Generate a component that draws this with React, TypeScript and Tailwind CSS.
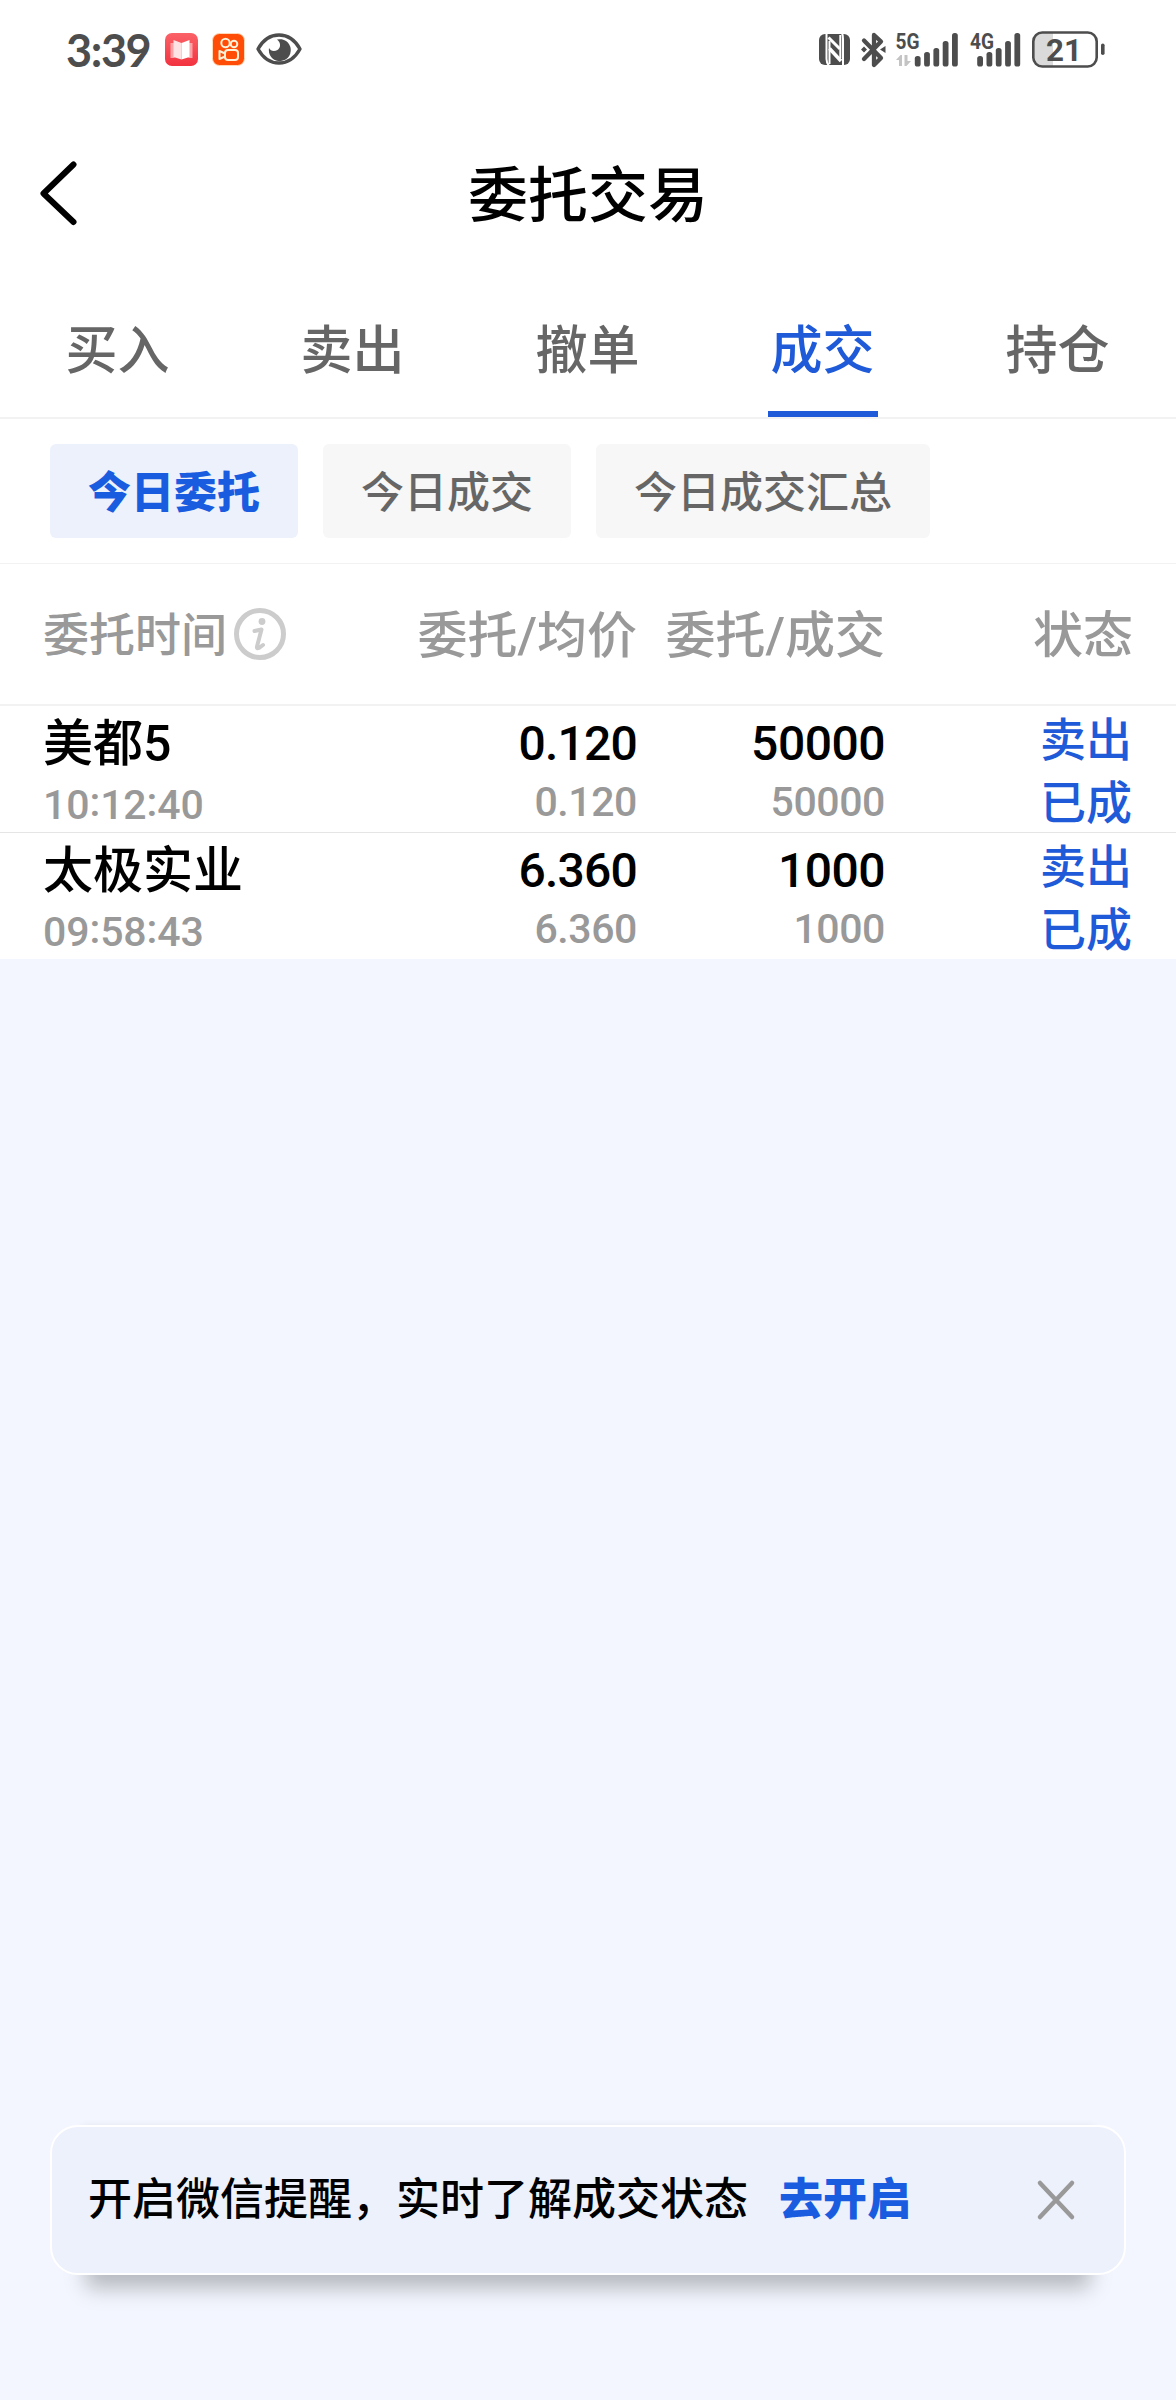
import { clsx } from "clsx";

const tabs = ["买入", "卖出", "撤单", "成交", "持仓"];
const filters = ["今日委托", "今日成交", "今日成交汇总"];

const orders = [
  { name: "美都5", time: "10:12:40", price: "0.120", avg: "0.120", amount: "50000", done: "50000", side: "卖出", status: "已成" },
  { name: "太极实业", time: "09:58:43", price: "6.360", avg: "6.360", amount: "1000", done: "1000", side: "卖出", status: "已成" }
];

const barTops = [56, 52, 48, 41, 33];

function Bars({ x }: { x: number }) {
  return (
    <g fill="#4d4d4d">
      {barTops.map((top, i) => (
        <rect key={top} x={x + i * 9.3} y={top} width="5.8" height={66.5 - top} rx="2.6" />
      ))}
    </g>
  );
}

function StatusBar() {
  return (
    <div className="flex h-[98px] items-center justify-between pl-[66px] pr-[70px]">
      <div className="flex items-center">
        <span className="w-[99px] pt-px font-['Lato',sans-serif] text-[45px] leading-[50px] font-bold tracking-[-1.4px] text-[#4d4d4d]">3:39</span>

        {/* Reader app */}
        <svg className="h-[33px] w-[33px]" viewBox="0 0 33 33">
          <defs>
            <linearGradient id="reader" x1="0" y1="0" x2="0" y2="1">
              <stop offset="0" stopColor="#fb6268" />
              <stop offset="1" stopColor="#f2323f" />
            </linearGradient>
          </defs>
          <rect width="33" height="33" rx="7" fill="url(#reader)" />
          <path d="M5.5 10h4v15h-4zM23.5 10h4v15h-4z" fill="#fba3a6" />
          <path d="M8.5 7l8 3v16.5l-8-2.5z" fill="#fde3e3" />
          <path d="M24.5 7l-8 3v16.5l8-2.5z" fill="#fff" />
        </svg>

        {/* Video app */}
        <svg className="ml-3.5 h-[33px] w-[33px]" viewBox="0 0 33 33">
          <rect x="0.5" y="0.5" width="32" height="32" rx="7" fill="#ff4c06" stroke="#ffd9b8" />
          <g fill="none" stroke="#fff0d8" strokeWidth="2">
            <circle cx="13.5" cy="10" r="4.2" />
            <circle cx="22" cy="11" r="3.3" />
            <rect x="13" y="17" width="13" height="10" rx="3" />
            <path d="M13 20.5L7.5 18v8l5.5-2.5" strokeLinejoin="round" />
          </g>
        </svg>

        {/* Eye comfort */}
        <svg className="ml-[11px] h-[32px] w-[46px]" viewBox="0 0 46 32">
          <path d="M2 16C7 7 14 2 23 2s16 5 21 14C39 25 32 30 23 30S7 25 2 16z" fill="none" stroke="#4d4d4d" strokeWidth="3.4" strokeLinejoin="round" />
          <path d="M21 6.5a11 11 0 1 1-8 8.500c1.5 3 5 4 8.5 2 3.500-2.300 3.500-7.500-.5-10.500z" fill="#4d4d4d" />
        </svg>
      </div>

      <svg className="h-[98px] w-[290px]" viewBox="816 0 290 98">
        {/* NFC */}
        <rect x="819" y="34" width="31" height="31" rx="6" fill="#4d4d4d" />
        <g fill="none" stroke="#fff">
          <path d="M826.5 33v26q0 4 2.5 7" strokeWidth="2" />
          <path d="M842 33q1 2 1 6v27" strokeWidth="2" />
          <path d="M828.5 37.5l11.5 11.5" strokeWidth="3" />
          <path d="M829.5 48.5L841 61" strokeWidth="3.5" />
          <path d="M829.5 41v23M840.3 35v23" strokeWidth="2" />
        </g>
        {/* Bluetooth */}
        <path d="M864 40.5L881 58l-7 7V35l7 6.5L864 59" fill="none" stroke="#4d4d4d" strokeWidth="4.3" strokeLinecap="round" strokeLinejoin="round" />
        <path d="M861 49.5l3-3 3 3-3 3zM880 49.5l5.5-3.5v7z" fill="#4d4d4d" />

        <text x="895.5" y="49" textLength="24" lengthAdjust="spacingAndGlyphs" className="font-['Roboto',sans-serif] text-[22px] font-bold" fill="#4d4d4d">5G</text>
        <path d="M896 60l4.5-5h1.5v11h-3v-6zM904.5 55h3v6h3.5l-4.5 5h-2z" fill="#c4c4c4" />
        <Bars x={914.8} />

        <text x="970" y="49" textLength="24" lengthAdjust="spacingAndGlyphs" className="font-['Roboto',sans-serif] text-[22px] font-bold" fill="#4d4d4d">4G</text>
        <Bars x={977.2} />

        {/* Battery */}
        <path d="M1053 33h-10a9 9 0 0 0-9 9v15a9 9 0 0 0 9 9h10z" fill="#dadada" />
        <rect x="1033.3" y="32.5" width="63.4" height="34" rx="9" fill="none" stroke="#4d4d4d" strokeWidth="2.6" />
        <rect x="1101" y="43.5" width="3.6" height="11.5" rx="1.8" fill="#4d4d4d" />
        <text x="1046" y="61" textLength="36" lengthAdjust="spacingAndGlyphs" className="font-['Roboto',sans-serif] text-[32px] font-bold" fill="#4d4d4d">21</text>
      </svg>
    </div>
  );
}

// Colons sit centred on the digits
function Time({ value }: { value: string }) {
  return (
    <p className="mt-px text-[41px] tracking-[-0.1px] text-[#999]">
      {value.split("").map((char, i) => (
        <span key={i} className={clsx(char === ":" && "relative -top-[3px]")}>{char}</span>
      ))}
    </p>
  );
}

export default function App() {
  const activeTab = "成交";
  const activeFilter = "今日委托";

  return (
    <div className="flex h-[2400px] w-[1176px] flex-col bg-[#f3f6fe] font-[Roboto,'Noto_Sans_CJK_SC',sans-serif] font-medium">
      <div className="bg-white">
        <StatusBar />

        {/* Title bar */}
        <header className="grid h-[190px] grid-cols-3 items-center px-[39px]">
          <svg className="h-[66px] w-[40px]" viewBox="0 0 40 66" fill="none" stroke="#000" strokeWidth="6" strokeLinecap="round" strokeLinejoin="round">
            <path d="M34.5 4.5L4.5 33.5l30 28.5" />
          </svg>
          <h1 className="pt-2 text-center text-[60px] leading-[80px] whitespace-nowrap text-black">委托交易</h1>
        </header>

        {/* Tabs */}
        <nav className="mr-px grid h-[129px] grid-cols-5">
          {tabs.map((tab) => (
            <div key={tab} className={clsx("flex flex-col items-center justify-between pt-[29px]", tab === activeTab ? "text-[#1f5bd8]" : "text-[#666]")}>
              <span className="text-[52px] leading-[70px]">{tab}</span>
              {tab === activeTab && <span className="h-1.5 w-[110px] bg-[#1f5bd8]" />}
            </div>
          ))}
        </nav>

        {/* Filters */}
        <div className="flex h-[147px] items-center gap-[25px] border-t-2 border-b border-[#f2f2f2] px-[50px]">
          {filters.map((filter) => (
            <button
              key={filter}
              className={clsx(
                "h-[94px] rounded-md px-[38px] pt-1 text-[43px] leading-[60px]",
                filter === activeFilter ? "bg-[#ecf1fc] font-extrabold text-[#1a5ce0]" : "bg-[#f7f7f7] text-[#666]"
              )}
            >
              {filter}
            </button>
          ))}
        </div>

        {/* Table header */}
        <div className="flex h-[142px] items-center border-b-2 border-[#f2f2f2] px-[43px] text-[50px] text-[#999]">
          <div className="flex w-[346px] items-center gap-[7px] text-[46px]">
            <span className="pt-[3px]">委托时间</span>
            <svg className="h-[52px] w-[52px]" viewBox="0 0 52 52">
              <circle cx="26" cy="26" r="23.5" fill="none" stroke="#ccc" strokeWidth="5" />
              <circle cx="28" cy="13.5" r="3.4" fill="#ccc" />
              <path d="M20.5 23l7-1.500-4.500 17q-.5 2.500 2 1.500l4-3" fill="none" stroke="#ccc" strokeWidth="4" strokeLinecap="round" strokeLinejoin="round" />
            </svg>
          </div>
          <span className="w-[248px] pt-[5px] text-right">委托/均价</span>
          <span className="w-[248px] pt-[5px] text-right">委托/成交</span>
          <span className="w-[248px] pt-[5px] text-right">状态</span>
        </div>

        {/* Orders */}
        <div className="divide-y divide-[#e5e5e5]">
          {orders.map((order) => (
            <div key={order.name} className="flex h-[127px] px-[43px] text-right text-[48px] leading-[60px] text-black last:h-[126px]">
              <div className="w-[346px] pt-2 text-left text-[50px]">
                <p>{order.name}</p>
                <Time value={order.time} />
              </div>
              <div className="w-[248px] pt-2 tracking-[-0.8px]">
                <p>{order.price}</p>
                <p className="-mt-0.5 text-[41px] tracking-[-0.4px] text-[#999]">{order.avg}</p>
              </div>
              <div className="w-[248px] pt-2 tracking-[-0.5px]">
                <p>{order.amount}</p>
                <p className="-mt-0.5 text-[41px] tracking-[-0.4px] text-[#999]">{order.done}</p>
              </div>
              <div className="w-[248px] pt-[3px] pr-px text-[46px] leading-[63px] text-[#1f5bd8]">
                <p>{order.side}</p>
                <p>{order.status}</p>
              </div>
            </div>
          ))}
        </div>
      </div>

      {/* Reminder */}
      <div className="mx-[50px] mt-auto mb-[125px] flex h-[150px] items-center rounded-[28px] border-2 border-white bg-[#edf1fc] pr-[47px] pl-[36px] text-[44px] leading-[60px] shadow-[0_49px_20px_-36px_rgba(0,0,0,0.25),0_-30px_8px_-32px_rgba(0,0,0,0.1)]">
        <span className="text-black">开启微信提醒，实时了解成交状态</span>
        <button className="ml-[31px] font-extrabold text-[#1a5ce0]">去开启</button>
        <svg className="ml-auto h-[42px] w-[42px]" viewBox="0 0 42 42" stroke="#999" strokeWidth="4.5" strokeLinecap="round">
          <path d="M5 4l32 34M37 4L5 38" />
        </svg>
      </div>
    </div>
  );
}
